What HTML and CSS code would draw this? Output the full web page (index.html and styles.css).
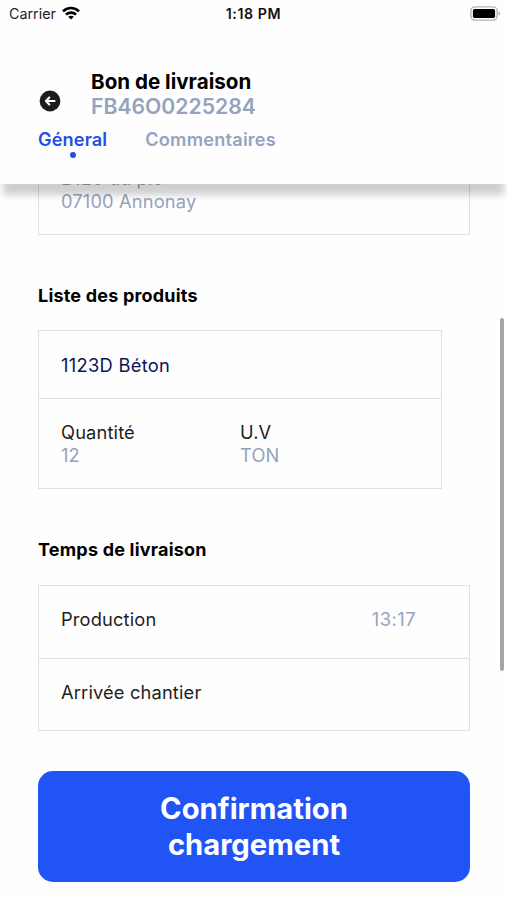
FILE: index.html
```html
<!DOCTYPE html>
<html lang="fr">
<head>
    <meta charset="UTF-8">
    <meta name="viewport" content="width=device-width, initial-scale=1.0">
    <title>Bon de livraison</title>
    <link rel="stylesheet" href="styles.css">
</head>
<body>

<header class="header">
    <div class="status-bar">
        <div class="carrier">
            <span>Carrier</span>
            <svg class="wifi" width="18" height="14" viewBox="0 0 18 14" fill="none" stroke="#000" stroke-width="2.6">
                <path d="M1 5.3C5.5 .8 12.500 .8 17 5.300"/>
                <path d="M3.900 8.600C6.700 5.900 11.300 5.900 14.100 8.600"/>
                <path d="M9 13.600L6.200 10.800C7.700 9.300 10.300 9.300 11.800 10.800Z" fill="#000" stroke="none"/>
            </svg>
        </div>
        <span class="clock">1:18 PM</span>
        <svg class="battery" width="31" height="15" viewBox="0 0 31 15">
            <rect x=".9" y=".9" width="26.200" height="13.200" rx="4" fill="#fff" stroke="#b5b5b5" stroke-width="1.400"/>
            <rect x="2.900" y="2.900" width="22.200" height="9.200" rx="1.800" fill="#000"/>
            <path d="M28.500 5.300Q30.300 6 30.300 7.500T28.500 9.700Z" fill="#b5b5b5"/>
        </svg>
    </div>

    <div class="title-row">
        <svg class="back" width="22" height="22" viewBox="0 0 22 22">
            <circle cx="11" cy="11" r="10.400" fill="#1c1c1e"/>
            <path d="M15.500 11H7M10.300 7.600L6.900 11L10.300 14.400" fill="none" stroke="#fff" stroke-width="2.100" stroke-linecap="round" stroke-linejoin="round"/>
        </svg>
        <div class="titles">
            <h1>Bon de livraison</h1>
            <div class="reference">FB46O0225284</div>
        </div>
    </div>

    <nav class="tabs">
        <a class="tab active">Géneral</a>
        <a class="tab">Commentaires</a>
    </nav>
</header>

<main class="content">
    <!-- Address card, scrolled partly under the header -->
    <div class="card address">
        <div>B120 du pic</div>
        <div>07100 Annonay</div>
    </div>

    <h2>Liste des produits</h2>
    <div class="card products">
        <div class="product-name">1123D Béton</div>
        <div class="product-info">
            <div>
                <div>Quantité</div>
                <div class="value">12</div>
            </div>
            <div>
                <div>U.V</div>
                <div class="value">TON</div>
            </div>
        </div>
    </div>

    <h2>Temps de livraison</h2>
    <div class="card times">
        <div class="time-row">
            <span>Production</span>
            <span class="value">13:17</span>
        </div>
        <div class="time-row">
            <span>Arrivée chantier</span>
        </div>
    </div>

    <button class="confirm">Confirmation<br>chargement</button>
</main>

<div class="scrollbar"></div>

</body>
</html>
```

FILE: styles.css
```css
* {
    box-sizing: border-box;
}

body {
    font-family: Inter, sans-serif;
    font-size: 18.3px;
    line-height: 22.5px;
    letter-spacing: 0.15px;
    color: #1e1e1e;
    background-color: #fefefe;
    margin: 0;
    height: 900px;
    overflow: hidden;
    position: relative;
}

.header {
    position: relative;
    z-index: 1;
    height: 184px;
    letter-spacing: 0;
    background-color: #fefefe;
    box-shadow: 0 14px 7px -3px rgba(0, 0, 0, 0.19);
}

/* Status bar */
.status-bar {
    display: grid;
    grid-template-columns: 1fr auto 1fr;
    align-items: center;
    height: 27px;
    padding: 0 6px 0 9px;
    font-size: 14.3px;
}

.carrier {
    display: flex;
    align-items: center;
    gap: 6px;
    padding-top: 1px;
}

.wifi {
    margin-top: -2px;
}

.clock {
    padding-top: 1px;
    font-weight: 600;
    font-size: 14.2px;
    letter-spacing: 0.6px;
    margin-left: -3px;
    color: #111;
}

.battery {
    justify-self: end;
}

/* Title and tabs */
.title-row {
    display: flex;
    gap: 30px;
    padding: 42px 39px 0;
}

.back {
    margin-top: 21px;
}

h1 {
    font-size: 20.6px;
    line-height: 25px;
    font-weight: 700;
    color: #000;
    margin: 0;
}

.reference {
    font-size: 21.2px;
    line-height: 25px;
    font-weight: 600;
    color: #94a3be;
}

.tabs {
    display: flex;
    gap: 38px;
    padding: 9px 38px 0;
}

.tab {
    font-size: 18.2px;
    font-weight: 600;
    letter-spacing: 0.2px;
    color: #94a3be;
}

.active {
    display: flex;
    flex-direction: column;
    align-items: center;
    letter-spacing: 0.1px;
    color: #1f50e8;
}

.active::after {
    content: "";
    width: 6px;
    height: 6px;
    margin-top: 1px;
    border-radius: 50%;
    background-color: #1f50e8;
}

/* Content */
.content {
    padding: 0 37px 0 38px;
}

.card {
    border: 1.5px solid #e0e0e2;
}

.address {
    margin-top: -30px;
    height: 81px;
    padding: 12px 22px;
    color: #94a3be;
}

h2 {
    font-size: 18px;
    line-height: 22px;
    font-weight: 700;
    letter-spacing: 0.2px;
    color: #000;
    margin: 50px 0 24px;
}

.address + h2 {
    margin-bottom: 23px;
}

.products {
    width: 404px;
    height: 159px;
}

.product-name {
    height: 68px;
    padding: 23px 22px;
    border-bottom: 1.5px solid #e0e0e2;
    letter-spacing: 0.3px;
    color: #0d1556;
}

.product-info {
    display: grid;
    grid-template-columns: 1fr 1fr;
    padding: 22px 22px;
}

.value {
    color: #94a3be;
}

.times {
    height: 146px;
}

.time-row {
    display: flex;
    justify-content: space-between;
    height: 72px;
    padding: 22px 53px 0 22px;
}

.time-row .value {
    letter-spacing: 0.5px;
}

.time-row + .time-row {
    border-top: 1.5px solid #e0e0e2;
}

.confirm {
    display: block;
    width: 100%;
    height: 111px;
    margin-top: 40px;
    padding: 0;
    border: none;
    border-radius: 15px;
    background-color: #2054f5;
    color: #fff;
    font-family: inherit;
    font-size: 29.2px;
    line-height: 36px;
    font-weight: 700;
}

.scrollbar {
    position: absolute;
    top: 318px;
    right: 3px;
    width: 4px;
    height: 353px;
    border-radius: 2px;
    background-color: #a6a6a6;
}
```
